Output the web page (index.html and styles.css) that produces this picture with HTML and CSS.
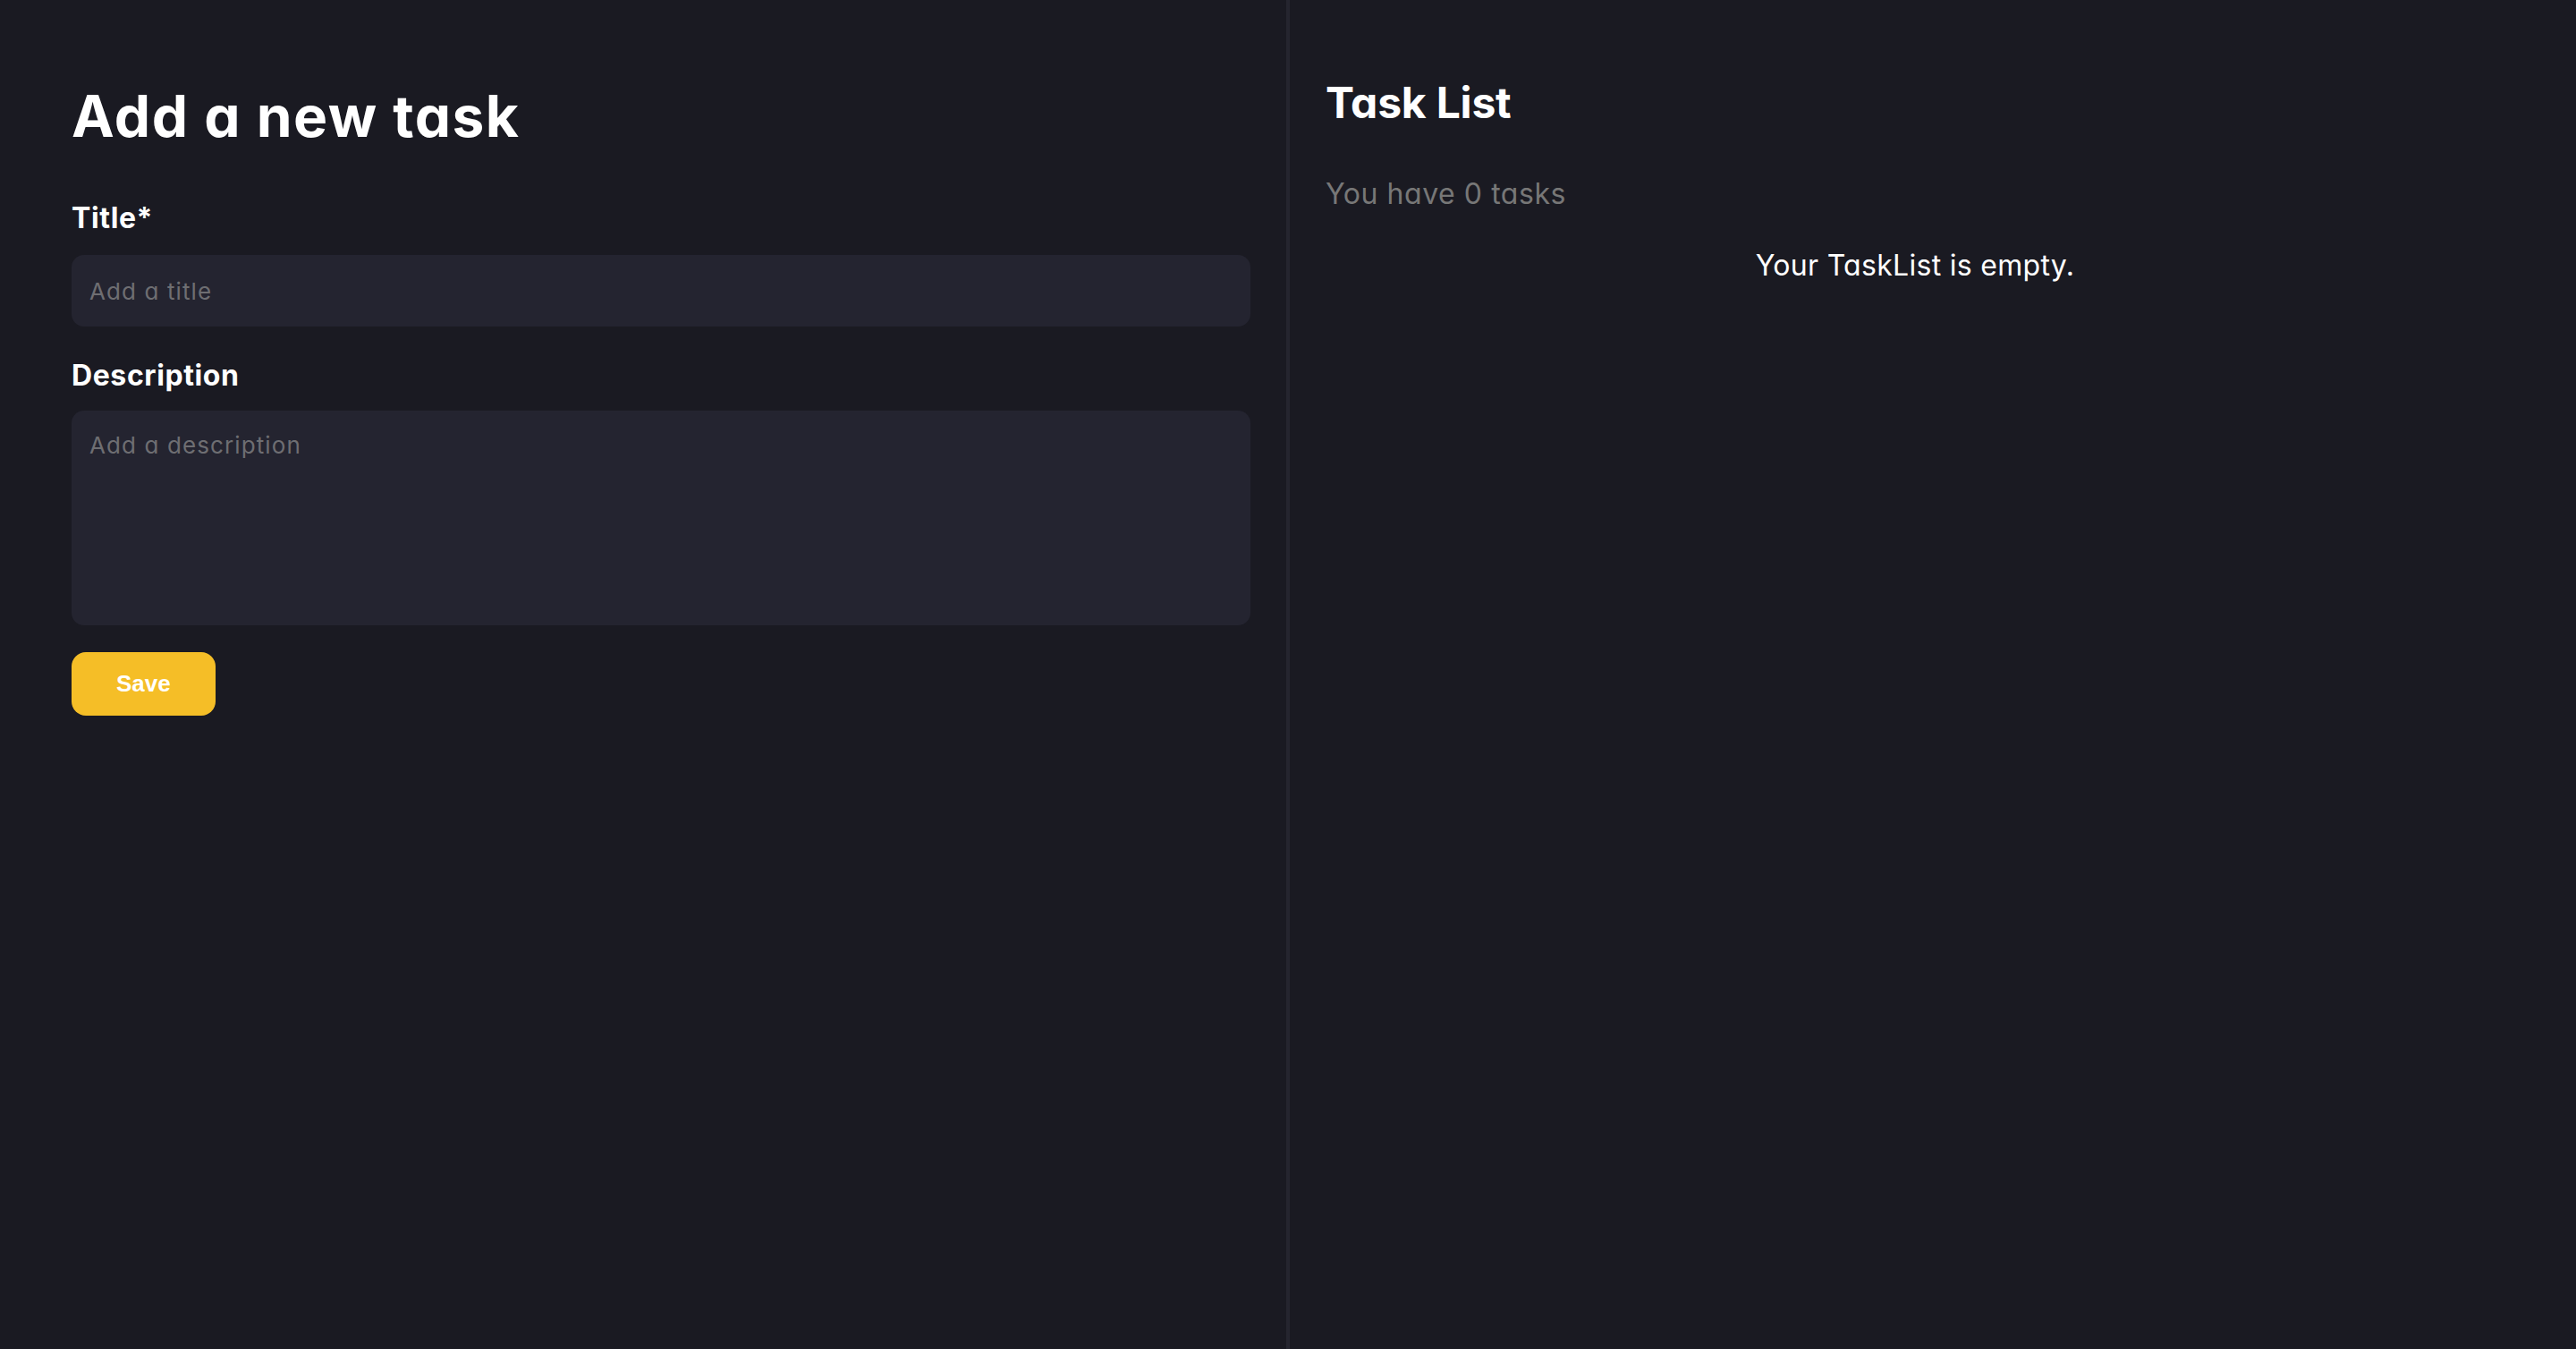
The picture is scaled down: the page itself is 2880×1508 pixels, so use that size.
FILE: index.html
```html
<!DOCTYPE html>
<html lang="en">
<head>
<meta charset="utf-8">
<title>Tasks</title>
<link rel="stylesheet" href="styles.css">
</head>
<body>
<main class="app">
  <section class="panel panel-form">
    <h1 class="form-title">Add a new task</h1>
    <form class="task-form">
      <label class="field-label" for="title">Title*</label>
      <input id="title" class="field-input" type="text" placeholder="Add a title">
      <label class="field-label field-label-desc" for="desc">Description</label>
      <textarea id="desc" class="field-textarea" placeholder="Add a description"></textarea>
      <button class="save-btn" type="button">Save</button>
    </form>
  </section>
  <section class="panel panel-list">
    <h2 class="list-title">Task List</h2>
    <p class="task-count">You have 0 tasks</p>
    <p class="empty-msg">Your TaskList is empty.</p>
  </section>
</main>
</body>
</html>
```

FILE: styles.css
```css
* {
  box-sizing: border-box;
}

html, body {
  margin: 0;
  padding: 0;
  background: #1a1a22;
}

body {
  font-family: Inter, "Noto Sans", sans-serif;
  font-feature-settings: "cv11" 1;
  color: #ffffff;
}

.app {
  display: grid;
  grid-template-columns: 1fr 1fr;
  min-height: 100vh;
  padding: 0 40px;
}

.panel {
  padding: 0 40px;
}

.panel-form {
  border-right: 2px solid #25252f;
}

.panel-list {
  border-left: 2px solid #25252f;
}

.form-title {
  margin: 90px 0 54px;
  font-size: 64px;
  line-height: 80px;
  font-weight: 700;
  letter-spacing: 1.5px;
}

.task-form {
  display: flex;
  flex-direction: column;
}

.field-label {
  font-size: 32px;
  line-height: 40px;
  font-weight: 700;
  letter-spacing: 0.6px;
  margin-bottom: 21px;
}

.field-label-title {
  letter-spacing: 0px;
}

.field-label-desc {
  margin-top: 35px;
  margin-bottom: 19px;
}

.field-input,
.field-textarea {
  display: block;
  width: 100%;
  border: none;
  outline: none;
  background: #242430;
  color: #ffffff;
  border-radius: 14px;
  font-family: Inter, "Noto Sans", sans-serif;
  font-feature-settings: "cv11" 1;
  font-size: 26px;
  letter-spacing: 1.1px;
  padding: 0 20px;
  margin: 0;
}

.field-input {
  height: 80px;
}

.field-textarea {
  height: 240px;
  padding: 19px 20px;
  line-height: 40px;
  resize: none;
}

.field-input::placeholder,
.field-textarea::placeholder {
  color: #6e6e72;
  opacity: 1;
}

.save-btn {
  align-self: flex-start;
  margin-top: 30px;
  height: 71px;
  padding: 0 50px;
  border: none;
  border-radius: 16px;
  background: #f5be27;
  color: #ffffff;
  font-family: "Liberation Sans", Arial, sans-serif;
  font-size: 26px;
  font-weight: 700;
  cursor: pointer;
}

.list-title {
  margin: 85px 0 48px;
  font-size: 48px;
  line-height: 60px;
  font-weight: 700;
  letter-spacing: -0.2px;
}

.task-count {
  margin: 0;
  font-size: 32px;
  line-height: 48px;
  color: #777777;
  letter-spacing: 0.55px;
}

.empty-msg {
  margin: 32px 0 0;
  font-size: 32px;
  line-height: 48px;
  text-align: center;
  color: #ffffff;
  letter-spacing: 0.3px;
}
```
